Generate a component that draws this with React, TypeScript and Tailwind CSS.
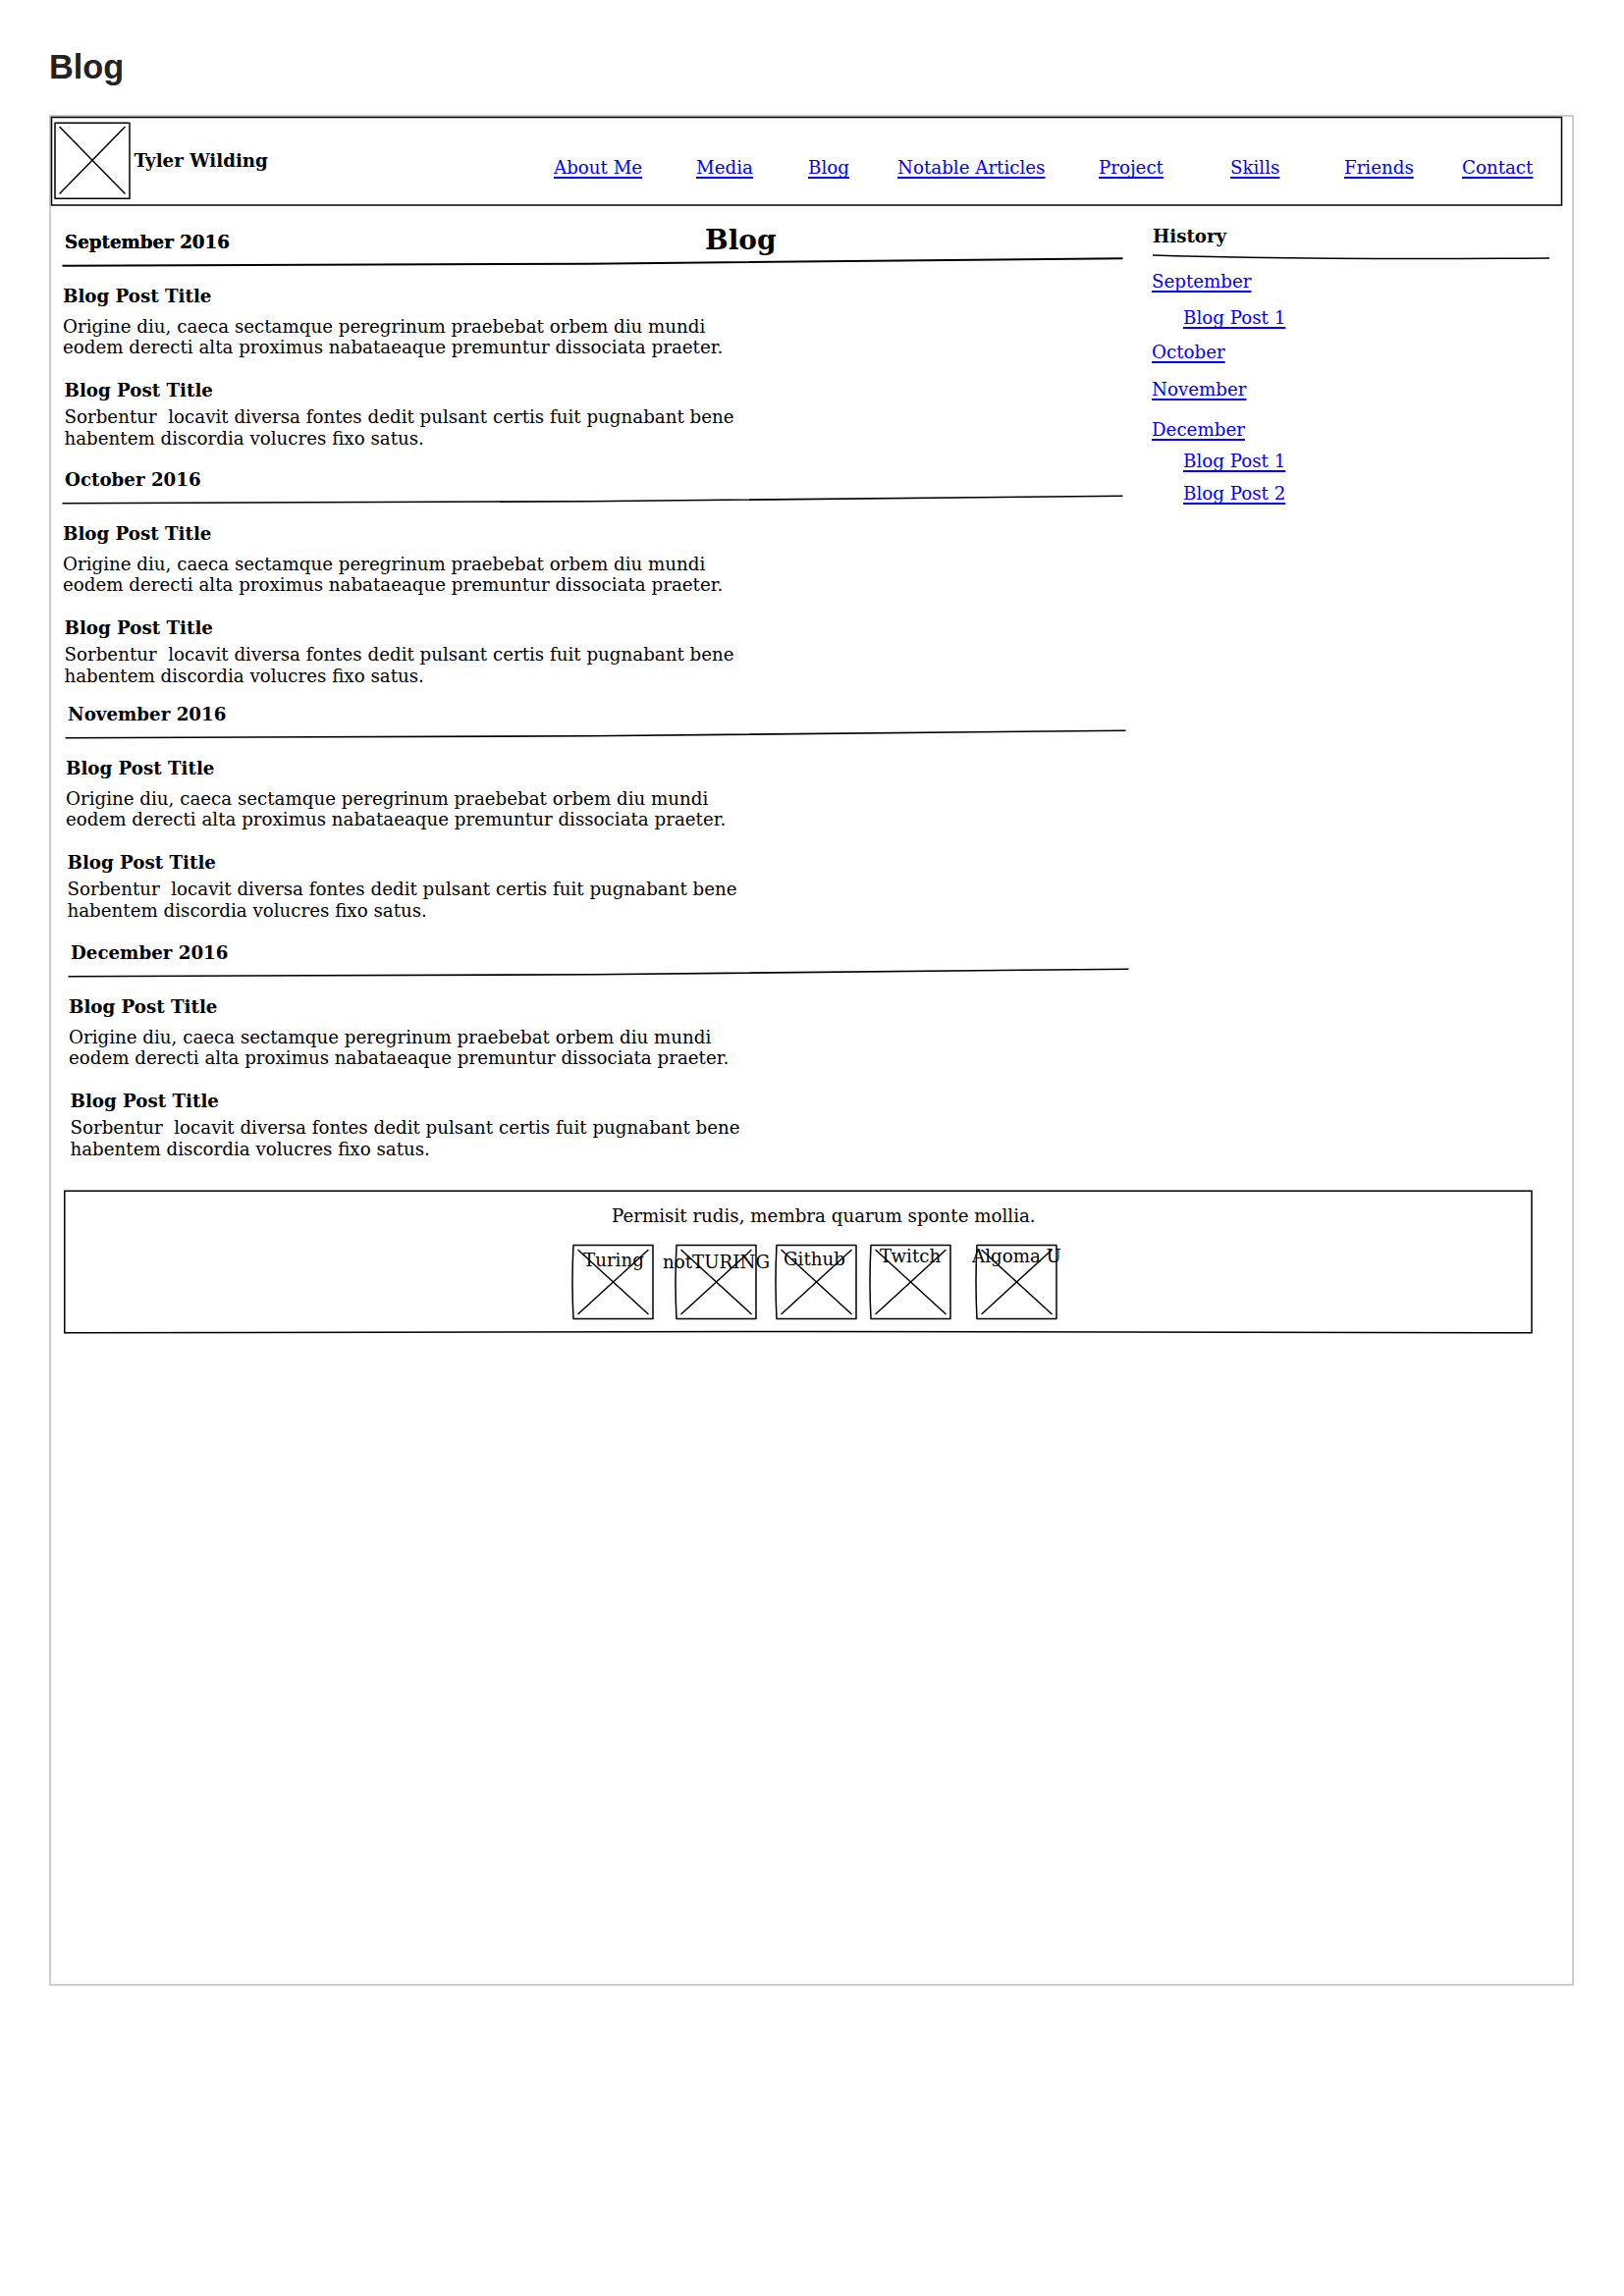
import React from "react";

const nav = [
  { label: "About Me", pos: "w-[145px]" },
  { label: "Media", pos: "w-[114px]" },
  { label: "Blog", pos: "w-[91px]" },
  { label: "Notable Articles", pos: "w-[205px]" },
  { label: "Project", pos: "w-[134px]" },
  { label: "Skills", pos: "w-[116px]" },
  { label: "Friends", pos: "w-[120px]" },
  { label: "Contact", pos: "w-[80px]" },
];

const months = [
  { name: "September 2016", box: "pl-[11px] h-[242px]", label: "pl-[3px] [text-shadow:0_0_0.6px_#000]", stroke: 2 },
  { name: "October 2016", box: "pl-[11px] h-[239px]", label: "pl-[3px]", stroke: 1.6 },
  { name: "November 2016", box: "pl-[14px] h-[243px]", label: "pl-[3px]", stroke: 1.6 },
  { name: "December 2016", box: "pl-[17px] h-[236px]", label: "pl-[3px]", stroke: 1.6 },
];

const history = [
  { label: "September", pos: "mt-[9px]" },
  { label: "Blog Post 1", pos: "mt-[16px] ml-8" },
  { label: "October", pos: "mt-[14px]" },
  { label: "November", pos: "mt-[17px]" },
  { label: "December", pos: "mt-[20px]" },
  { label: "Blog Post 1", pos: "mt-[11px] ml-8" },
  { label: "Blog Post 2", pos: "mt-[12px] ml-8" },
];

const socials = [
  { label: "Turing", box: "w-[105px]", text: "left-[12px] top-[6px]" },
  { label: "notTURING", box: "w-[102px]", text: "left-[-12px] top-[8px]" },
  { label: "Github", box: "w-[96px]", text: "left-[9px] top-[5px]" },
  { label: "Twitch", box: "w-[108px]", text: "left-[11px] top-[2px]" },
  { label: "Algoma U", box: "w-[84px]", text: "left-[-3px] top-[2px]" },
];

const link =
  "whitespace-nowrap text-[#0000ff] underline decoration-2 underline-offset-[3px] [text-decoration-skip-ink:none]";

function Post({ title, lines, gap }: { title: string; lines: string[]; gap: string }) {
  return (
    <article>
      <h3 className="font-bold">{title}</h3>
      <p className={"whitespace-pre leading-[21.33px] " + gap}>{lines.join("\n")}</p>
    </article>
  );
}

function Month({ m }: { m: (typeof months)[number] }) {
  return (
    <section className={m.box}>
      <h2 className={"font-bold " + m.label}>{m.name}</h2>
      <svg className="mt-[5px] block h-[12px] w-[1084px] overflow-visible" fill="none" stroke="#000">
        <path d="M.5 8.7C380 9.2 700 5.4 1080.5 1.2" strokeWidth={m.stroke} />
      </svg>
      <div className="mt-[17px] pl-px">
        <Post
          title="Blog Post Title"
          gap="mt-[10px]"
          lines={[
            "Origine diu, caeca sectamque peregrinum praebebat orbem diu mundi",
            "eodem derecti alta proximus nabataeaque premuntur dissociata praeter.",
          ]}
        />
      </div>
      <div className="mt-[22px] pl-[2.5px]">
        <Post
          title="Blog Post Title"
          gap="mt-[6.6px]"
          lines={[
            "Sorbentur  locavit diversa fontes dedit pulsant certis fuit pugnabant bene",
            "habentem discordia volucres fixo satus.",
          ]}
        />
      </div>
    </section>
  );
}

export default function App() {
  return (
    <div className="h-[2339px] w-[1654px] bg-white px-[50px] pt-[48px]">
      <h1 className="h-[69px] font-['Liberation_Sans',sans-serif] text-[34.3px] leading-[40px] font-bold text-[#222]">
        Blog
      </h1>
      <div className="h-[1906px] w-[1553px] border-2 border-[#ccc] font-['DejaVu_Serif',serif] text-[18.24px] leading-[21px] text-black">
        <header className="relative flex h-[91px] w-[1540px]">
          <svg className="absolute inset-0 h-[91px] w-[1540px] overflow-visible" fill="none" stroke="#000" strokeWidth="1.5">
            <path d="M.5 .5Q770 2.3 1538.5 .5V90Q770 91.6 .5 90Z" />
          </svg>
          <svg className="mt-[5px] ml-[3px] h-[80px] w-[78px] shrink-0" fill="none" stroke="#000" strokeWidth="1.5" strokeLinecap="round" strokeLinejoin="round">
            <path d="M1 1.2H77V78.2H1ZM6 5.5L72 73M72 5.5L6 73" />
          </svg>
          <span className="mt-[34px] ml-[3.5px] w-[427.5px] font-bold">Tyler Wilding</span>
          <nav className="mt-[41px] flex">
            {nav.map((n) => (
              <div key={n.label} className={n.pos}>
                <a className={link}>{n.label}</a>
              </div>
            ))}
          </nav>
        </header>
        <div className="flex h-[1000px]">
          <main className="relative w-[1121px] pt-[26px]">
            <h2 className="absolute top-[19px] left-[666px] text-[28px] leading-[32px] font-bold">Blog</h2>
            {months.map((m) => (
              <Month key={m.name} m={m} />
            ))}
          </main>
          <aside className="w-[410px] pt-[20px]">
            <h2 className="pl-px font-bold">History</h2>
            <svg className="mt-[8px] block h-[8px] w-[408px] overflow-visible" fill="none" stroke="#000" strokeWidth="1.5">
              <path d="M1 1C130 5 260 5 405 4" />
            </svg>
            <ul>
              {history.map((h, i) => (
                <li key={i} className={h.pos}>
                  <a className={link}>{h.label}</a>
                </li>
              ))}
            </ul>
          </aside>
        </div>
        <footer className="relative ml-[13px] h-[148px] w-[1498px]">
          <svg className="absolute inset-0 h-[148px] w-[1498px] overflow-visible" fill="none" stroke="#000" strokeWidth="1.5">
            <path d="M.8 3.2H1495V147.8Q900 146 750 146.5Q400 146.5 .8 147.8Z" />
          </svg>
          <p className="pt-[18px] pl-[558px]">Permisit rudis, membra quarum sponte mollia.</p>
          <div className="mt-[18px] flex pl-[517px]">
            {socials.map((s) => (
              <div key={s.label} className={"relative " + s.box}>
                <svg className="h-[78px] w-[84px] overflow-visible" fill="none" stroke="#000" strokeWidth="1.5" strokeLinecap="round" strokeLinejoin="round">
                  <path d="M2 1.5H83V76.5H2Q0 39 2 1.5ZM7 6.5L78 71.5M78 6.5L7 71.5" />
                </svg>
                <span className={"absolute whitespace-nowrap " + s.text}>{s.label}</span>
              </div>
            ))}
          </div>
        </footer>
      </div>
    </div>
  );
}
